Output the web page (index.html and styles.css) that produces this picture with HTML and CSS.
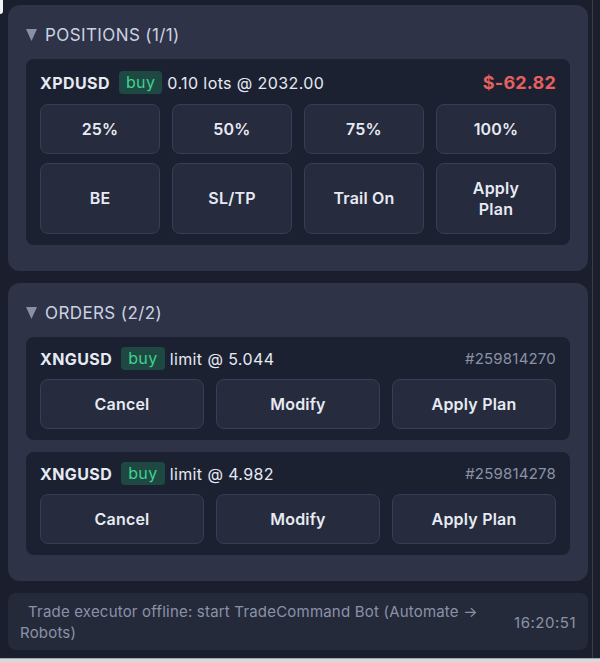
FILE: index.html
```html
<!doctype html>
<html lang="en">
<head>
    <meta charset="UTF-8">
    <title>Trade Panel</title>
    <link rel="stylesheet" href="styles.css">
</head>
<body>
<div class="window">
    <div class="main">
        <span class="corner"></span>

        <section class="panel">
            <div class="panel-head">
                <svg class="caret" width="11" height="12" viewBox="0 0 11 12"><polygon points="0,0 11,0 5.5,12" fill="#8890a8"/></svg>
                POSITIONS (1/1)
            </div>
            <div class="card pos">
                <div class="card-row">
                    <span class="sym">XPDUSD</span>
                    <span class="badge">buy</span>
                    <span class="info">0.10 lots @ 2032.00</span>
                    <span class="pnl">$-62.82</span>
                </div>
                <div class="btns four">
                    <button>25%</button>
                    <button>50%</button>
                    <button>75%</button>
                    <button>100%</button>
                    <button>BE</button>
                    <button>SL/TP</button>
                    <button>Trail On</button>
                    <button>Apply Plan</button>
                </div>
            </div>
        </section>

        <section class="panel">
            <div class="panel-head">
                <svg class="caret" width="11" height="12" viewBox="0 0 11 12"><polygon points="0,0 11,0 5.5,12" fill="#8890a8"/></svg>
                ORDERS (2/2)
            </div>
            <div class="card">
                <div class="card-row">
                    <span class="sym">XNGUSD</span>
                    <span class="badge">buy</span>
                    <span class="info">limit @ 5.044</span>
                    <span class="ticket">#259814270</span>
                </div>
                <div class="btns three">
                    <button>Cancel</button>
                    <button>Modify</button>
                    <button>Apply Plan</button>
                </div>
            </div>
            <div class="card">
                <div class="card-row">
                    <span class="sym">XNGUSD</span>
                    <span class="badge">buy</span>
                    <span class="info">limit @ 4.982</span>
                    <span class="ticket">#259814278</span>
                </div>
                <div class="btns three">
                    <button>Cancel</button>
                    <button>Modify</button>
                    <button>Apply Plan</button>
                </div>
            </div>
        </section>

        <div class="status">
            <span class="status-msg">Trade executor offline: start TradeCommand Bot (Automate → Robots)</span>
            <span class="status-time">16:20:51</span>
        </div>
    </div>
    <div class="side"></div>
</div>
</body>
</html>
```

FILE: styles.css
```css
*
{
    box-sizing: border-box;
    font-family: Inter, "Noto Sans", sans-serif;
}

body
{
    margin: 0;
    background-color: #d9d9db;
}

.window
{
    display: flex;
    height: 659px;
    border-bottom: 1px solid #a4a6ad;
    background-color: #1a1d29;
}

.main
{
    position: relative;
    width: 593px;
    padding: 5px 4px 0 8px;
    background-color: #1b1f2d;
    border-right: 1px solid #3a3e4d;
}

.side
{
    flex: 1;
    background-color: #1c1f2b;
}

/* little white tab in the top left corner */
.corner
{
    position: absolute;
    left: 0;
    top: 0;
    width: 3px;
    height: 14px;
    background-color: #f2f2f2;
    border-bottom-right-radius: 3px;
}

.panel
{
    background-color: #2e3347;
    border-radius: 12px;
    padding: 19px 18px 26px;
    margin-bottom: 12px;
}

.panel-head
{
    display: flex;
    align-items: center;
    gap: 8px;
    height: 22px;
    margin-bottom: 13px;
    font-size: 17px;
    letter-spacing: 0.4px;
    color: #cbd2e2;
}

.card
{
    background-color: #1c2131;
    border-radius: 8px;
    padding: 10px 14px 11px;
}

.card + .card
{
    margin-top: 12px;
}

.card.pos
{
    padding-top: 12px;
}

.card-row
{
    display: flex;
    align-items: center;
    height: 23px;
    margin-bottom: 9px;
    font-size: 16px;
    letter-spacing: 0.4px;
    color: #e6eaf3;
}

.card.pos .card-row
{
    margin-bottom: 10px;
}

.sym
{
    font-weight: 700;
    margin-right: 9px;
}

.badge
{
    height: 23px;
    line-height: 23px;
    padding: 0 7px;
    border-radius: 4px;
    background-color: #1e4943;
    color: #3fd28e;
    margin-right: 5px;
}

.info
{
    flex: 1;
}

.pnl
{
    font-size: 18px;
    font-weight: 700;
    letter-spacing: 0.2px;
    color: #e5605f;
}

.ticket
{
    font-size: 15px;
    letter-spacing: 0.2px;
    color: #8a92a7;
}

.btns
{
    display: grid;
    column-gap: 12px;
    row-gap: 9px;
}

.btns.four
{
    grid-template-columns: repeat(4, 1fr);
}

.btns.three
{
    grid-template-columns: repeat(3, 1fr);
}

button
{
    padding: 13.5px 19px;
    line-height: 21px;
    font-size: 16px;
    font-weight: 600;
    letter-spacing: 0.2px;
    color: #e6eaf3;
    background-color: #262b3d;
    border: 1px solid #373e57;
    border-radius: 8px;
}

.status
{
    display: flex;
    align-items: center;
    gap: 20px;
    padding: 8px 12px 7px;
    background-color: #252a3b;
    border-radius: 8px;
    font-size: 15px;
    line-height: 21px;
    letter-spacing: 0.2px;
    color: #8a92a8;
}

.status-msg
{
    flex: 1;
    text-indent: 8px;
}

.status-time
{
    white-space: nowrap;
    letter-spacing: 0.5px;
}
```
